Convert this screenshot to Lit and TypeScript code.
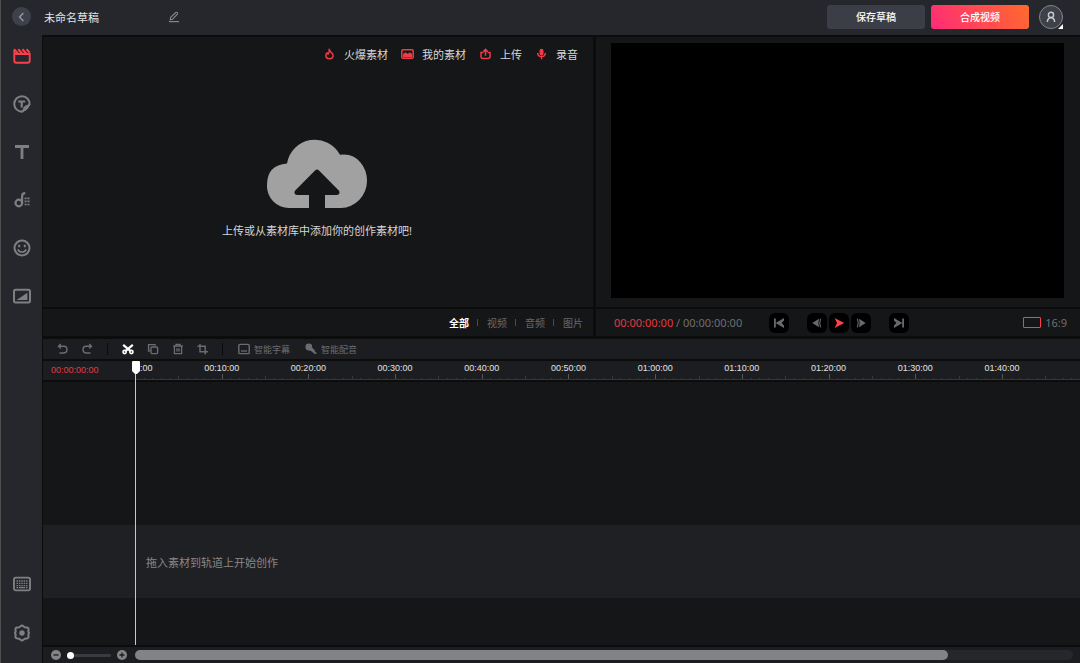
import { LitElement, html, css, svg, nothing } from "lit";
import { customElement, property, state } from "lit/decorators.js";
import { classMap } from "lit/directives/class-map.js";

const baseStyles = css`
  * {
    box-sizing: border-box;
  }
  button,
  input {
    font: inherit;
    color: inherit;
    background: none;
    border: 0;
    margin: 0;
    padding: 0;
  }
  button {
    display: inline-flex;
    align-items: center;
    justify-content: center;
    cursor: pointer;
    white-space: nowrap;
  }
  svg {
    display: block;
    flex: none;
    fill: none;
    stroke: currentColor;
  }
`;

const icons: Record<string, unknown> = {
  media: svg`<path d="M1.300 3v10.800q0 2 2 2h11.400q2 0 2-2V7H1.300" stroke-width="1.900"/><path d="M1 2.200L5 6.800M5.200 2.200l4 4.600M9.400 2.200l4 4.600M13.600 2.200l3 3.400" stroke-width="2.100"/>`,
  sticker: svg`<path d="M16.600 9.500A7.700 7.700 0 1 0 9.500 16.600z" stroke-width="2" stroke-linejoin="round"/><path d="M10 16.200q-.2-5.800 6.200-6.200L15 13l-2 2z" fill="currentColor" stroke-width="1"/><path d="M5.200 6.500h7M8.700 6.500v6" stroke-width="2.200"/>`,
  text: svg`<path d="M2 3.500h14M9 3.500V16" stroke-width="2.800"/>`,
  music: svg`<circle cx="5.800" cy="12" r="3.300" stroke-width="2.200"/><path d="M9.100 12.400V5.200q0-3 3.200-3" stroke-width="2.200"/><path d="M11.600 7.300h2M14.500 7.300h2M11.600 10.400h2M14.500 10.400h2M11.600 13.500h2M14.500 13.500h2" stroke-width="1.700"/>`,
  emoji: svg`<circle cx="9" cy="9" r="7.500" stroke-width="2"/><path d="M6.200 5.800v2.400M11.800 5.800v2.400" stroke-width="2"/><path d="M4.900 10.300q1.200 2.700 4.100 2.700t4.100-2.700" stroke-width="1.700"/>`,
  transition: svg`<rect x="1" y="2.800" width="16" height="12.600" rx="1.600" stroke-width="2"/><path d="M3.600 13L14.400 5.800V13z" fill="currentColor" stroke="none"/>`,
  keyboard: svg`<rect x="1" y="2.600" width="16" height="12.800" rx="1.800" stroke-width="1.900"/><path d="M3.500 6h11M3.500 8.300h11M3.500 10.600h11" stroke-width="1.300" stroke-dasharray="1.500 .9"/><path d="M3.500 12.700h1.700M6 12.700h6M12.800 12.700h1.700" stroke-width="1.200"/>`,
  settings: svg`<path d="M7.600 2.200q1.400-1.400 2.800 0l1.400 1.100 2 .2q1.900.2 1.800 2.100l-.3 1.800.7 1.600-.7 1.600.3 1.800q.1 1.900-1.800 2.100l-2 .2-1.400 1.100q-1.400 1.400-2.800 0l-1.400-1.100-2-.2q-1.900-.2-1.800-2.100l.3-1.800L2 9l.7-1.600-.3-1.800q-.1-1.900 1.800-2.100l2-.2z" stroke-width="2" stroke-linejoin="round"/><circle cx="9" cy="9" r="2.700" fill="currentColor" stroke="none"/>`,
};

@customElement("side-nav")
class SideNav extends LitElement {
  @state() private active = "media";

  static styles = [
    baseStyles,
    css`
      :host {
        display: flex;
        flex-direction: column;
        justify-content: space-between;
        background: #26272c;
        color: #7e7f83;
        padding-bottom: 9px;
      }
      .group {
        display: flex;
        flex-direction: column;
        gap: 6px;
      }
      .lower {
        gap: 7px;
      }
      .item {
        height: 42px;
        width: 100%;
      }
      .active {
        color: #f8414c;
      }
    `,
  ];

  private item(id: string, label: string) {
    return html`<button
      class=${classMap({ item: true, active: this.active === id })}
      aria-label=${label}
      @click=${() => (this.active = id)}
    >
      <svg width="18" height="18" viewBox="0 0 18 18">${icons[id]}</svg>
    </button>`;
  }

  render() {
    return html`
      <nav class="group">
        ${this.item("media", "素材")} ${this.item("sticker", "贴纸")} ${this.item("text", "文字")}
        ${this.item("music", "音乐")} ${this.item("emoji", "表情")} ${this.item("transition", "转场")}
      </nav>
      <div class="group lower">${this.item("keyboard", "快捷键")} ${this.item("settings", "设置")}</div>
    `;
  }
}

@customElement("top-bar")
class TopBar extends LitElement {
  @property() name = "未命名草稿";

  static styles = [
    baseStyles,
    css`
      :host {
        display: flex;
        align-items: center;
        height: 35px;
        padding: 0 17px 2px 11px;
        background: #26272c;
        color: #e4e4e6;
      }
      .back {
        width: 19px;
        height: 19px;
        border-radius: 50%;
        background: #3f414a;
        color: #93959c;
        margin-right: 13px;
      }
      .title {
        width: 124px;
        font-size: 11px;
        height: 20px;
      }
      .edit {
        color: #85868a;
      }
      .actions {
        display: flex;
        align-items: center;
        gap: 6px;
        margin-left: auto;
      }
      .btn {
        width: 98px;
        height: 24px;
        border-radius: 3px;
        font-size: 10px;
        font-weight: 500;
        color: #fff;
        background: #3c3e47;
      }
      .primary {
        background: linear-gradient(60deg, #ff2b78, #ff6a2c);
      }
      .avatar {
        position: relative;
        width: 24px;
        height: 24px;
        margin-left: 4px;
        border-radius: 50%;
        border: 1px solid #85868c;
        background: #3f414a;
        color: #c9cacd;
      }
      .corner {
        position: absolute;
        right: -1px;
        bottom: -1px;
        border-left: 5px solid transparent;
        border-bottom: 5px solid #fff;
      }
    `,
  ];

  render() {
    return html`
      <button class="back" aria-label="返回">
        <svg width="10" height="10" viewBox="0 0 10 10"><path d="M6.400 1L2.600 5l3.800 4" stroke-width="1.500" /></svg>
      </button>
      <input class="title" aria-label="草稿名称" .value=${this.name} />
      <button class="edit" aria-label="重命名">
        <svg width="12" height="12" viewBox="0 0 12 12">
          <path d="M2.200 8.800l.5-2.500L7.800 1.500q.8-.6 1.500.1t.1 1.500L4.600 8.200z" stroke-width="1.100" />
          <path d="M1 10.600h10" stroke-width="1.200" />
        </svg>
      </button>
      <div class="actions">
        <button class="btn">保存草稿</button>
        <button class="btn primary">合成视频</button>
        <button class="avatar" aria-label="账户">
          <svg width="12" height="12" viewBox="0 0 12 12">
            <circle cx="6" cy="3.900" r="2.600" stroke-width="1.400" />
            <path d="M2.400 11q0-3.800 3.600-4.400 3.600.6 3.600 4.400" stroke-width="1.500" />
          </svg>
          <span class="corner"></span>
        </button>
      </div>
    `;
  }
}

@customElement("media-panel")
class MediaPanel extends LitElement {
  @state() private filter = "全部";

  static styles = [
    baseStyles,
    css`
      :host {
        display: flex;
        flex-direction: column;
        background: #151617;
        color: #d6d6d8;
        font-size: 11px;
      }
      .sources {
        display: flex;
        justify-content: flex-end;
        gap: 13px;
        padding: 8px 15px 0 0;
      }
      .source {
        gap: 8px;
        height: 18px;
      }
      .source svg {
        color: #ee3b45;
      }
      .drop {
        flex: 1;
        display: flex;
        flex-direction: column;
        align-items: center;
        justify-content: center;
        gap: 15px;
        padding: 8px 2px 0 0;
      }
      .drop svg {
        fill: #a1a1a1;
        stroke: none;
      }
      .hint {
        margin: 0;
        line-height: 16px;
      }
      .filters {
        display: flex;
        align-items: center;
        justify-content: flex-end;
        gap: 8px;
        height: 29px;
        padding-right: 10px;
        border-top: 2px solid #0c0c0d;
        font-size: 10px;
        color: #69696d;
      }
      .sep {
        width: 1px;
        height: 7px;
        margin-right: 1px;
        background: #4b4b4f;
      }
      .on {
        color: #fff;
        font-weight: 700;
      }
    `,
  ];

  private source(icon: unknown, label: string) {
    return html`<button class="source">
      <svg width="13" height="12" viewBox="0 0 13 12">${icon}</svg>${label}
    </button>`;
  }

  render() {
    const filters = ["全部", "视频", "音频", "图片"];
    return html`
      <div class="sources">
        ${this.source(
          svg`<path d="M6.200 1.200q.2 1.700 2 3.200 1.900 1.500 1.900 3.200 0 3.200-3.600 3.200T2.900 7.600q0-1.500 1.200-2.700l1 1.200q1.600-2 1.100-4.900z" stroke-width="1.500" stroke-linejoin="round"/>`,
          "火爆素材",
        )}
        ${this.source(
          svg`<rect x=".8" y="1.700" width="11.400" height="8.600" rx="1.200" stroke-width="1.500"/><path d="M2 9.200V6l2.500-1.800 2.200 1.600L9 4.200 11 6v3.200z" fill="currentColor" stroke="none"/>`,
          "我的素材",
        )}
        ${this.source(
          svg`<path d="M4.400 4.400H2v4.200q0 2 2 2h5q2 0 2-2V4.400H8.600M6.500 7.800V1.800M4.300 3.600l2.200-2.200 2.200 2.200" stroke-width="1.500"/>`,
          "上传",
        )}
        ${this.source(
          svg`<rect x="4.500" y=".8" width="4" height="6.600" rx="2" fill="currentColor" stroke="none"/><path d="M2.700 5q.1 3.600 3.800 3.600T10.300 5M6.500 8.600V11.200" stroke-width="1.500"/>`,
          "录音",
        )}
      </div>
      <div class="drop">
        <svg width="100" height="69" viewBox="0 0 100 69">
          <path
            d="M42 69H22A22 22 0 0 1 0 46Q0 26 20 24.500A28.300 28.300 0 0 1 73 15.800Q86 14 93.500 23.500 100 31 100 42A27 27 0 0 1 74 69H58V56H70q3.600-.8 2-4.200L52 31.500q-2-1.800-4 0L28 51.800q-1.800 3.400 2 4.200h12z"
          />
        </svg>
        <p class="hint">上传或从素材库中添加你的创作素材吧!</p>
      </div>
      <div class="filters">
        ${filters.map(
          (f, i) => html`${i ? html`<span class="sep"></span>` : nothing}<button
              class=${classMap({ on: this.filter === f })}
              @click=${() => (this.filter = f)}
            >
              ${f}
            </button>`,
        )}
      </div>
    `;
  }
}

@customElement("preview-panel")
class PreviewPanel extends LitElement {
  static styles = [
    baseStyles,
    css`
      :host {
        display: flex;
        flex-direction: column;
        background: #151617;
        color: #6f6f73;
        font-size: 11px;
      }
      .stage {
        flex: 1;
        margin: 6px 16px 9px 15px;
        background: #000;
      }
      .bar {
        display: grid;
        grid-template-columns: 1fr auto 1fr;
        align-items: center;
        height: 29px;
        padding: 0 13px 0 18px;
        border-top: 2px solid #0c0c0d;
      }
      .now {
        color: #e23a43;
      }
      .controls {
        display: flex;
        gap: 2px;
        margin-left: -4px;
      }
      .control {
        width: 20px;
        height: 20px;
        border-radius: 6px;
        background: #000;
        color: #68696c;
      }
      .control svg {
        fill: currentColor;
        stroke: none;
      }
      .first {
        margin-right: 16px;
      }
      .last {
        margin-left: 16px;
      }
      .play {
        color: #fb414b;
      }
      .ratio {
        justify-self: end;
        gap: 4px;
      }
      .frame {
        width: 18px;
        height: 11px;
        border: 1px solid #f8414c;
        border-radius: 1px;
      }
    `,
  ];

  private control(cls: string, label: string, shape: unknown) {
    return html`<button class="control ${cls}" aria-label=${label}>
      <svg width="12" height="12" viewBox="0 0 12 12">${shape}</svg>
    </button>`;
  }

  render() {
    return html`
      <div class="stage"></div>
      <div class="bar">
        <div><span class="now">00:00:00:00</span> / 00:00:00:00</div>
        <div class="controls">
          ${this.control("first", "跳到开头", svg`<path d="M1 1.500h1.800v9H1zM11 1v2.600L8.600 6 11 8.400V11L2.600 6z"/>`)}
          ${this.control("", "上一帧", svg`<path d="M8 1.800L7.400 6 8 10.200 1.300 6zM10.200 1.600q-1.800 4.400 0 8.800L9 10.200q-1.600-4.200 0-8.400z"/>`)}
          ${this.control("play", "播放", svg`<path d="M1.600 1L11.200 6l-9.600 5L4 6z"/>`)}
          ${this.control("", "下一帧", svg`<path d="M4 1.800L4.600 6 4 10.200 10.700 6zM1.800 1.600q1.800 4.400 0 8.800L3 10.200q1.600-4.200 0-8.400z"/>`)}
          ${this.control("last", "跳到结尾", svg`<path d="M9.200 1.500H11v9H9.200zM1 1v2.600L3.400 6 1 8.400V11l8.400-5z"/>`)}
        </div>
        <button class="ratio"><span class="frame"></span>16:9</button>
      </div>
    `;
  }
}

@customElement("time-line")
class TimeLine extends LitElement {
  static styles = [
    baseStyles,
    css`
      :host {
        position: relative;
        display: flex;
        flex-direction: column;
        background: #151617;
        color: #6c6c70;
      }
      .tools {
        display: flex;
        align-items: center;
        height: 22px;
        padding-left: 7px;
        background: #1c1d20;
        border-bottom: 2px solid #0c0c0d;
        font-size: 9px;
      }
      .tool {
        width: 25px;
        height: 20px;
      }
      .cut {
        color: #fff;
      }
      .sep {
        width: 1px;
        height: 12px;
        margin: 0 7px;
        background: #0a0a0b;
      }
      .smart {
        gap: 4px;
        margin: 0 7px 0 8px;
      }
      .ruler {
        display: grid;
        grid-template-columns: 92px 1fr;
        height: 21px;
        background: #1c1d20;
        border-bottom: 2px solid #0c0c0d;
        font: 9px/12px "Liberation Sans", sans-serif;
      }
      .current {
        padding: 3px 0 0 8px;
        color: #e23a43;
      }
      .scale {
        display: grid;
        grid-template-columns: repeat(10, 10fr) 9fr;
        overflow: hidden;
        padding-top: 1px;
        border-bottom: 1px solid #37383b;
      }
      .segment {
        display: flex;
        flex-direction: column;
        justify-content: space-between;
        min-width: 0;
        overflow: visible;
      }
      .label {
        width: 60px;
        margin-left: -30px;
        text-align: center;
        color: #e2e2e4;
      }
      .ticks {
        display: grid;
        grid-template-columns: repeat(10, 1fr);
        align-items: end;
      }
      .ticks.short {
        grid-template-columns: repeat(9, 1fr);
      }
      .tick {
        height: 1px;
        border-left: 1px solid #37383b;
      }
      .tick:first-child {
        height: 5px;
        border-color: #55565a;
      }
      .tick:nth-child(6) {
        height: 3px;
      }
      .tracks {
        flex: 1;
        display: grid;
        grid-template-rows: 143fr 73px 47fr;
      }
      .track {
        grid-row: 2;
        display: flex;
        align-items: center;
        padding-left: 103px;
        background: #1f2023;
        color: #87888a;
        font-size: 11px;
      }
      .bottom {
        display: grid;
        grid-template-columns: 92px 1fr;
        align-items: center;
        height: 18px;
        padding-right: 7px;
        background: #1c1d20;
        border-top: 2px solid #0c0c0d;
      }
      .zoom {
        display: flex;
        align-items: center;
        gap: 6px;
        padding-left: 8px;
        color: #1c1d20;
      }
      .round {
        width: 10px;
        height: 10px;
        border-radius: 50%;
        background: #838486;
      }
      .slider {
        appearance: none;
        width: 44px;
        height: 7px;
      }
      .slider::-webkit-slider-runnable-track {
        height: 3px;
        border-radius: 2px;
        background: #3a3b40;
      }
      .slider::-webkit-slider-thumb {
        appearance: none;
        width: 7px;
        height: 7px;
        margin-top: -2px;
        border-radius: 50%;
        background: #fff;
      }
      .scroll {
        height: 10px;
        border-radius: 5px;
        background: #26272b;
      }
      .thumb {
        height: 10px;
        border-radius: 5px;
        background: #828386;
      }
      .playhead {
        position: absolute;
        top: 22px;
        bottom: 18px;
        left: 89px;
        width: 8px;
        display: flex;
        flex-direction: column;
        align-items: center;
      }
      .handle {
        width: 8px;
        flex: none;
        fill: #fff;
        stroke: none;
      }
      .stem {
        flex: 1;
        width: 1px;
        margin-right: 1px;
        background: #c8c8c9;
      }
    `,
  ];

  private label(i: number) {
    const two = (n: number) => String(n).padStart(2, "0");
    return `${two(Math.floor(i / 6))}:${two((i % 6) * 10)}:00`;
  }

  private tool(cls: string, label: string, shape: unknown) {
    return html`<button class="tool ${cls}" aria-label=${label}>
      <svg width="12" height="12" viewBox="0 0 12 12">${shape}</svg>
    </button>`;
  }

  render() {
    const scroll = 86.7;
    return html`
      <div class="tools">
        ${this.tool("", "撤销", svg`<path d="M1.500 3.300H7q3 0 3 3.300T7 10H2.500M3.800 1L1.500 3.300l2.300 2.300" stroke-width="1.400"/>`)}
        ${this.tool("", "重做", svg`<path d="M9.500 3.300H4q-3 0-3 3.300T4 10h4.500M7.200 1l2.300 2.300-2.300 2.300" stroke-width="1.400"/>`)}
        <span class="sep"></span>
        ${this.tool("cut", "分割", svg`<path d="M1.200 1.800l7.400 6.300M10.800 1.800L3.400 8.100" stroke-width="2.200"/><circle cx="2.600" cy="9" r="1.600" stroke-width="1.600"/><circle cx="9.400" cy="9" r="1.600" stroke-width="1.600"/>`)}
        ${this.tool("", "复制", svg`<rect x="4" y="4" width="6.600" height="6.600" rx="1" stroke-width="1.400"/><path d="M2.800 8H1.600V1.600H8v1.200" stroke-width="1.400"/>`)}
        ${this.tool("", "删除", svg`<path d="M1.200 3h9.600M4 2.800V1.400h4v1.400M2.400 3v7.600h7.200V3M5 5.200v3.400M7 5.200v3.400" stroke-width="1.300"/>`)}
        ${this.tool("", "裁剪", svg`<path d="M3 1v7.800H11M.5 3.200h7.700V11.500" stroke-width="1.400"/>`)}
        <span class="sep"></span>
        <button class="smart">
          <svg width="12" height="12" viewBox="0 0 12 12">
            <rect x=".8" y="1.400" width="10.400" height="9.200" rx="1.200" stroke-width="1.400" />
            <path d="M3 8h6" stroke-width="1.300" />
          </svg>
          智能字幕
        </button>
        <button class="smart">
          <svg width="12" height="12" viewBox="0 0 12 12">
            <circle cx="3.800" cy="4" r="3.400" fill="currentColor" stroke="none" />
            <path d="M4 7.200L7 4.600 10.500 8 8.800 9.600z" fill="currentColor" stroke="none" />
            <path d="M7.500 7.500q1.200 3.200 4 2.500" stroke-width="1.500" />
          </svg>
          智能配音
        </button>
      </div>
      <div class="ruler">
        <div class="current">00:00:00:00</div>
        <div class="scale">
          ${Array.from({ length: 11 }, (_, i) => {
            const count = i === 10 ? 9 : 10;
            return html`<div class="segment">
              <span class="label">${this.label(i)}</span>
              <div class=${classMap({ ticks: true, short: count === 9 })}>
                ${Array.from({ length: count }, () => html`<span class="tick"></span>`)}
              </div>
            </div>`;
          })}
        </div>
      </div>
      <div class="tracks"><div class="track">拖入素材到轨道上开始创作</div></div>
      <div class="bottom">
        <div class="zoom">
          <button class="round" aria-label="缩小">
            <svg width="10" height="10" viewBox="0 0 10 10"><path d="M2.500 5h5" stroke-width="1.300" /></svg>
          </button>
          <input class="slider" type="range" min="0" max="100" value="0" aria-label="时间轴缩放" />
          <button class="round" aria-label="放大">
            <svg width="10" height="10" viewBox="0 0 10 10"><path d="M2.500 5h5M5 2.500v5" stroke-width="1.300" /></svg>
          </button>
        </div>
        <div class="scroll"><div class="thumb" style="width:${scroll}%"></div></div>
      </div>
      <div class="playhead">
        <svg class="handle" width="8" height="13" viewBox="0 0 8 13">
          <path d="M1 0h6q1 0 1 1v9l-3 3H3L0 10V1q0-1 1-1z" />
        </svg>
        <span class="stem"></span>
      </div>
    `;
  }
}

@customElement("app-root")
class AppRoot extends LitElement {
  static styles = [
    baseStyles,
    css`
      :host {
        display: flex;
        flex-direction: column;
        height: 100vh;
        overflow: hidden;
        background: #0c0c0d;
        border-left: 1px solid #4e504f;
        box-sizing: border-box;
        font-family: "Noto Sans", "Noto Sans CJK SC", sans-serif;
      }
      .body {
        flex: 1;
        min-height: 0;
        display: grid;
        grid-template-columns: 41px 1fr;
        column-gap: 1px;
      }
      .work {
        display: grid;
        grid-template-rows: 299fr 324fr;
        row-gap: 3px;
        padding-top: 2px;
        min-width: 0;
      }
      .top {
        display: grid;
        grid-template-columns: 550fr 484fr;
        column-gap: 3px;
      }
    `,
  ];

  render() {
    return html`
      <top-bar></top-bar>
      <div class="body">
        <side-nav></side-nav>
        <main class="work">
          <div class="top">
            <media-panel></media-panel>
            <preview-panel></preview-panel>
          </div>
          <time-line></time-line>
        </main>
      </div>
    `;
  }
}
